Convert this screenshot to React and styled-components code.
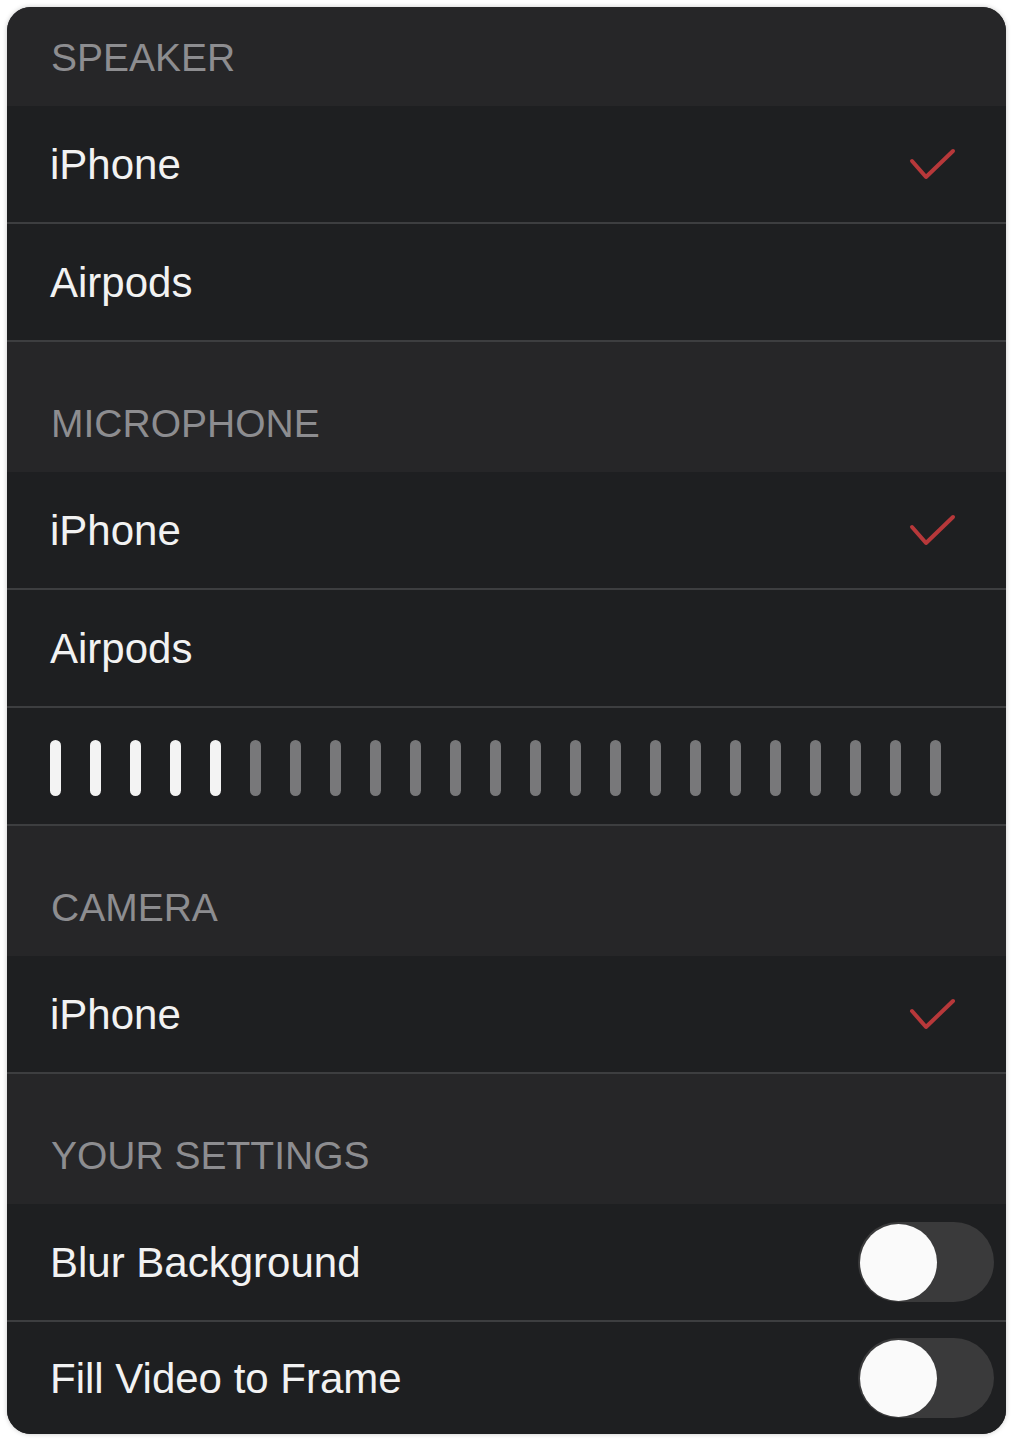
import styled, { createGlobalStyle } from "styled-components";

const GlobalStyle = createGlobalStyle`
  html, body {
    margin: 0;
    padding: 0;
    background: #ffffff;
  }
  body {
    font-family: "Liberation Sans", Arial, sans-serif;
  }
`;

const sections = [
  { title: "SPEAKER", items: [{ label: "iPhone", checked: true }, { label: "Airpods" }] },
  {
    title: "MICROPHONE",
    items: [{ label: "iPhone", checked: true }, { label: "Airpods" }],
    meter: { total: 23, level: 5 },
  },
  { title: "CAMERA", items: [{ label: "iPhone", checked: true }] },
  {
    title: "YOUR SETTINGS",
    toggles: ["Blur Background", "Fill Video to Frame"],
  },
];

const Check = () => (
  <svg width="48" height="34" viewBox="0 0 48 34" fill="none">
    <path
      d="M3 13 L17 29 L44 3"
      stroke="#b7383a"
      strokeWidth="4"
      strokeLinecap="round"
      strokeLinejoin="round"
    />
  </svg>
);

const App = () => {
  return (
    <>
      <GlobalStyle />
      <Page>
        <Panel>
          {sections.map((section, i) => (
            <Section key={section.title}>
              <Header first={i === 0}>{section.title}</Header>
              {section.items &&
                section.items.map(item => (
                  <Row key={item.label}>
                    <Label>{item.label}</Label>
                    {item.checked && (
                      <CheckWrap>
                        <Check />
                      </CheckWrap>
                    )}
                  </Row>
                ))}
              {section.meter && (
                <MeterRow>
                  {Array.from({ length: section.meter.total }).map((_, n) => (
                    <Bar key={n} on={n < section.meter.level} />
                  ))}
                </MeterRow>
              )}
              {section.toggles &&
                section.toggles.map((t, n) => (
                  <Row key={t} last={n === section.toggles.length - 1}>
                    <Label>{t}</Label>
                    <Toggle>
                      <Knob />
                    </Toggle>
                  </Row>
                ))}
            </Section>
          ))}
        </Panel>
      </Page>
    </>
  );
};

export default App;

const Page = styled.div`
  padding: 7px 9px 6px 7px;
  background: #ffffff;
`;

const Panel = styled.div`
  width: 999px;
  height: 1427px;
  border-radius: 24px;
  overflow: hidden;
  background: #1e1f21;
  box-shadow: 0 0 5px rgba(0, 0, 0, 0.22);
  display: flex;
  flex-direction: column;
`;

const Section = styled.div`
  display: flex;
  flex-direction: column;
`;

const Header = styled.div`
  height: ${p => (p.first ? "99px" : "130px")};
  box-sizing: border-box;
  background: #262628;
  color: #8d8d90;
  font-size: 39px;
  line-height: 1;
  padding: 0 0 29px 44px;
  display: flex;
  align-items: flex-end;
`;

const Row = styled.div`
  height: ${p => (p.last ? "112px" : "118px")};
  box-sizing: border-box;
  border-bottom: ${p => (p.last ? "none" : "2px solid #3d3e40")};
  background: #1e1f21;
  display: flex;
  align-items: center;
  justify-content: space-between;
  padding: 0 12px 0 43px;
`;

const Label = styled.span`
  color: #f2f2f2;
  font-size: 42px;
  line-height: 1;
  padding-top: 2px;
`;

const CheckWrap = styled.span`
  display: flex;
  margin-right: 37px;
  margin-top: 2px;
`;

const MeterRow = styled.div`
  height: 118px;
  box-sizing: border-box;
  border-bottom: 2px solid #3d3e40;
  background: #1e1f21;
  display: flex;
  align-items: center;
  gap: 29px;
  padding: 4px 0 0 43px;
`;

const Bar = styled.span`
  width: 11px;
  height: 56px;
  border-radius: 6px;
  background: ${p => (p.on ? "#f3f3f3" : "#78787a")};
`;

const Toggle = styled.div`
  width: 136px;
  height: 80px;
  border-radius: 40px;
  background: #3a3a3b;
  display: flex;
  align-items: center;
  padding-left: 2px;
  box-sizing: border-box;
`;

const Knob = styled.span`
  width: 77px;
  height: 77px;
  border-radius: 50%;
  background: #fafafa;
`;
